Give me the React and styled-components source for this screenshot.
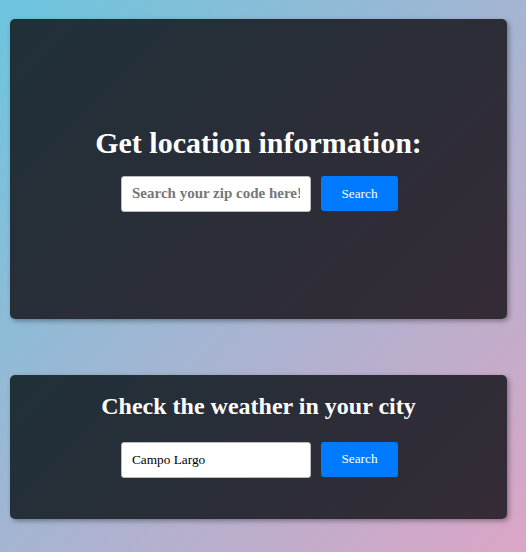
import React from 'react';
import styled, { createGlobalStyle } from 'styled-components';

const GlobalStyle = createGlobalStyle`
  html, body {
    margin: 0;
    padding: 0;
  }
  body {
    font-family: 'Liberation Serif', 'Times New Roman', serif;
    background: linear-gradient(to bottom right, #6cc5de, #dca5c6);
    min-height: 100vh;
  }
`;

const Page = styled.main`
  padding: 19px 0 20px 10px;
  display: flex;
  flex-direction: column;
  gap: 56px;
`;

const Card = styled.section`
  width: 497px;
  box-sizing: border-box;
  height: ${(p) => p.height}px;
  padding: ${(p) => p.padding};
  border-radius: 5px;
  background: linear-gradient(135deg, #1f3039, #352b36);
  box-shadow: 2px 2px 5px rgba(0, 0, 0, 0.35);
  display: flex;
  flex-direction: column;
  align-items: center;
  justify-content: ${(p) => (p.centered ? 'center' : 'flex-start')};
  gap: ${(p) => p.gap}px;
`;

const Title = styled.h1`
  margin: 0;
  color: #fff;
  font-family: 'Liberation Serif', 'Times New Roman', serif;
  font-weight: bold;
  font-size: ${(p) => p.size}px;
  line-height: 1.15;
  text-align: center;
`;

const Row = styled.form`
  display: flex;
  align-items: flex-start;
  gap: 10px;
  padding-left: 2px;
`;

const Input = styled.input`
  width: 190px;
  height: 36px;
  box-sizing: border-box;
  padding: 0 10px;
  border: 1px solid #bbb;
  border-radius: 3px;
  background: #fff;
  font-family: 'Liberation Serif', 'Times New Roman', serif;
  font-size: 13.3px;
  color: #000;
  outline: none;

  &::placeholder {
    color: #777;
    font-weight: bold;
    font-size: 15px;
  }
`;

const Button = styled.button`
  width: 77px;
  height: 35px;
  border: none;
  border-radius: 3px;
  background: #007bff;
  color: #fff;
  font-family: 'Liberation Serif', 'Times New Roman', serif;
  font-size: 13.3px;
  cursor: pointer;
`;

export default function App() {
  return (
    <>
      <GlobalStyle />
      <Page>
        <Card height={300} centered gap={16} padding="0 20px">
          <Title size={30}>Get location information:</Title>
          <Row onSubmit={(e) => e.preventDefault()}>
            <Input placeholder="Search your zip code here!" />
            <Button type="submit">Search</Button>
          </Row>
        </Card>
        <Card height={144} gap={21} padding="18px 20px 0">
          <Title size={24}>Check the weather in your city</Title>
          <Row onSubmit={(e) => e.preventDefault()}>
            <Input defaultValue="Campo Largo" />
            <Button type="submit">Search</Button>
          </Row>
        </Card>
      </Page>
    </>
  );
}
